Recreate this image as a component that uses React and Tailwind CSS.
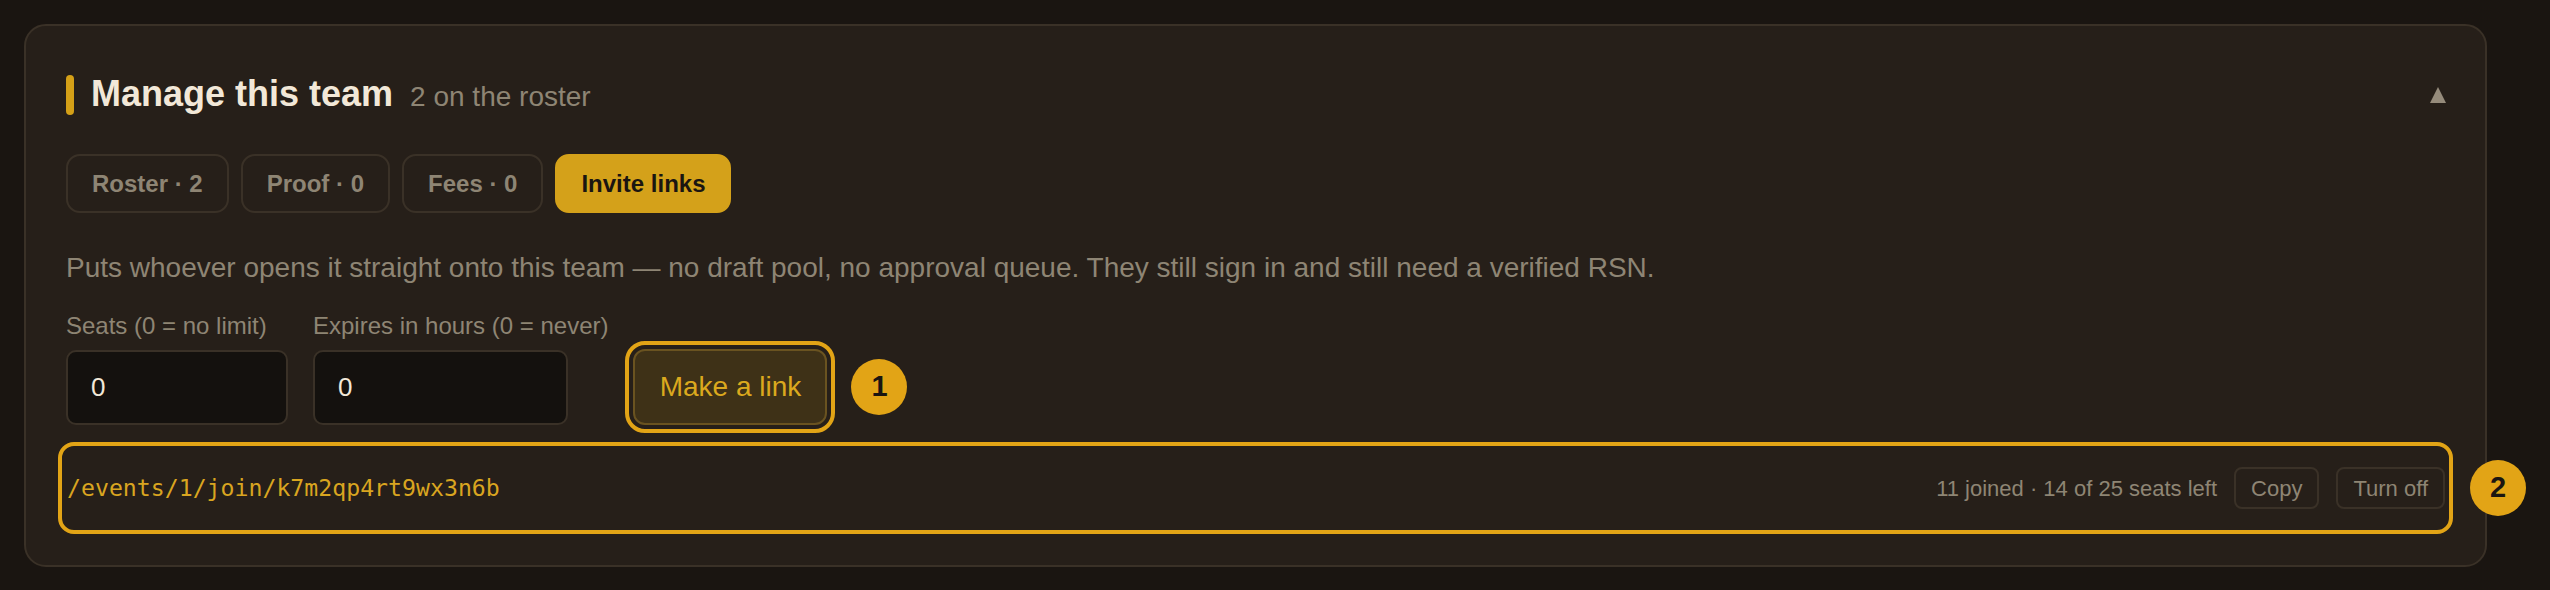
export default function App() {
  const tabs = [
    { label: 'Roster · 2', active: false },
    { label: 'Proof · 0', active: false },
    { label: 'Fees · 0', active: false },
    { label: 'Invite links', active: true },
  ];

  return (
    <div className="min-h-screen bg-[#1a1511] pt-[24px] pl-[24px] font-['Liberation_Sans',Arial,sans-serif]">
      <div className="w-[2463px] rounded-[22px] border-2 border-[#3a3127] bg-[#261f19] px-[40px] pt-[47px] pb-[39px]">
        {/* Header */}
        <div className="flex h-[43px] items-center justify-between">
          <div className="flex items-center">
            <span className="h-[40px] w-[8px] rounded-full bg-[#d4a017]" />
            <div className="ml-[17px] flex items-baseline">
              <h2 className="text-[36px] font-bold leading-[43px] text-[#f2e8d8]">Manage this team</h2>
              <span className="ml-[17px] text-[28px] text-[#8e8574]">2 on the roster</span>
            </div>
          </div>
          <svg width="16" height="16" viewBox="0 0 16 16" className="mr-[-1px]">
            <polygon points="8,0 16,16 0,16" fill="#958b7b" />
          </svg>
        </div>

        {/* Tabs */}
        <div className="mt-[38px] flex gap-[12px]">
          {tabs.map((t) =>
            t.active ? (
              <button
                key={t.label}
                className="flex h-[59px] items-center rounded-[14px] border-2 border-[#d4a11a] bg-[#d4a11a] px-[24px] text-[24px] font-bold text-[#1a1511]"
              >
                {t.label}
              </button>
            ) : (
              <button
                key={t.label}
                className="flex h-[59px] items-center rounded-[14px] border-2 border-[#3a3127] px-[24px] text-[24px] font-bold text-[#8e8574]"
              >
                {t.label}
              </button>
            )
          )}
        </div>

        <p className="mt-[34px] text-[28px] leading-[42px] text-[#8e8574]">
          Puts whoever opens it straight onto this team — no draft pool, no approval queue. They still sign in and still need a verified RSN.
        </p>

        {/* Fields */}
        <div className="mt-[19px] flex items-end gap-[25px]">
          <label className="flex flex-col">
            <span className="text-[24px] leading-[36px] text-[#8e8574]">Seats (0 = no limit)</span>
            <input
              defaultValue="0"
              className="mt-[6px] h-[75px] w-[222px] rounded-[10px] border-2 border-[#3a3127] bg-[#14110e] px-[23px] text-[26px] text-[#f2e8d8] outline-none"
            />
          </label>
          <label className="flex flex-col">
            <span className="text-[24px] leading-[36px] text-[#8e8574]">Expires in hours (0 = never)</span>
            <input
              defaultValue="0"
              className="mt-[6px] h-[75px] w-[255px] rounded-[10px] border-2 border-[#3a3127] bg-[#14110e] px-[23px] text-[26px] text-[#f2e8d8] outline-none"
            />
          </label>
          <div className="flex items-center gap-[24px]">
            <button className="h-[76px] w-[194px] rounded-[12px] border-2 border-[#6a5320] bg-[#3e3117] text-[28px] text-[#dba91e] outline-4 outline-offset-4 outline-[#e2a416]">
              Make a link
            </button>
            <span className="flex h-[56px] w-[56px] items-center justify-center rounded-full bg-[#e2a416] text-[29px] font-bold text-[#1a1511]">
              1
            </span>
          </div>
        </div>

        {/* Link row */}
        <div className="relative mt-[25px] flex h-[76px] items-center justify-between rounded-[8px] pl-[1px] outline-4 outline-offset-4 outline-[#e2a416]">
          <span className="font-['DejaVu_Sans_Mono',monospace] text-[23.2px] text-[#d9a520]">/events/1/join/k7m2qp4rt9wx3n6b</span>
          <div className="flex items-center gap-[17px]">
            <span className="text-[22px] text-[#8e8574]">11 joined · 14 of 25 seats left</span>
            <button className="h-[42px] rounded-[8px] border-2 border-[#3a3127] px-[15px] text-[22px] text-[#8e8574]">Copy</button>
            <button className="h-[42px] rounded-[8px] border-2 border-[#3a3127] px-[15px] text-[22px] text-[#8e8574]">Turn off</button>
          </div>
          <span className="absolute right-[-81px] top-1/2 flex h-[56px] w-[56px] -translate-y-1/2 items-center justify-center rounded-full bg-[#e2a416] text-[29px] font-bold text-[#1a1511]">
            2
          </span>
        </div>
      </div>
    </div>
  );
}
